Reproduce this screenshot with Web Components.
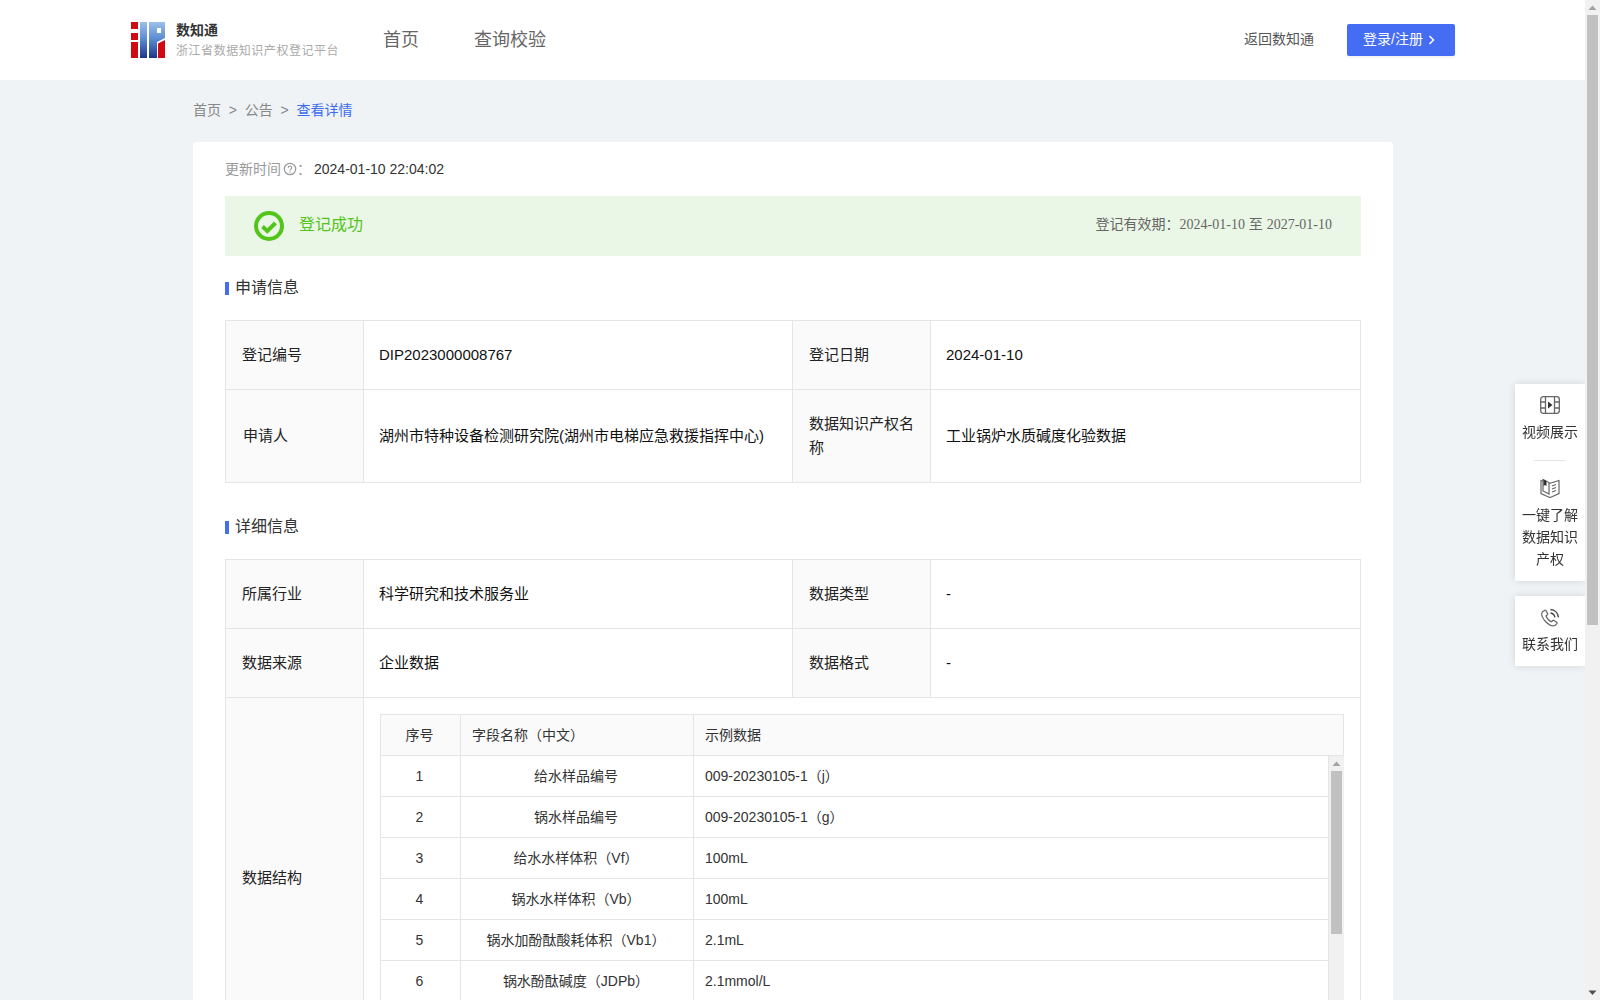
<!DOCTYPE html>
<html lang="zh"><head><meta charset="utf-8"><title>数知通</title>
<style>
html,body{margin:0;padding:0}
body{background:#eff3f6;font-family:"Liberation Sans","Noto Sans CJK SC",sans-serif;font-size:14px;color:#333;padding-right:15px}
</style></head><body>
<site-header></site-header>
<page-crumbs><span>首页</span><span>公告</span><b>查看详情</b></page-crumbs>
<detail-card>
  <update-line time="2024-01-10 22:04:02"></update-line>
  <status-banner from="2024-01-10" to="2027-01-10"></status-banner>
  <section-title style="margin-top:20px">申请信息</section-title>
  <kv-table style="margin-top:22px">
    <kv-cell label>登记编号</kv-cell><kv-cell>DIP2023000008767</kv-cell><kv-cell label>登记日期</kv-cell><kv-cell>2024-01-10</kv-cell>
    <kv-cell label indent>申请人</kv-cell><kv-cell>湖州市特种设备检测研究院(湖州市电梯应急救援指挥中心)</kv-cell><kv-cell label>数据知识产权名称</kv-cell><kv-cell>工业锅炉水质碱度化验数据</kv-cell>
  </kv-table>
  <section-title style="margin-top:32px">详细信息</section-title>
  <kv-table style="margin-top:22px">
    <kv-cell label>所属行业</kv-cell><kv-cell>科学研究和技术服务业</kv-cell><kv-cell label>数据类型</kv-cell><kv-cell>-</kv-cell>
    <kv-cell label>数据来源</kv-cell><kv-cell>企业数据</kv-cell><kv-cell label>数据格式</kv-cell><kv-cell>-</kv-cell>
    <kv-cell label>数据结构</kv-cell>
    <kv-cell wide><field-table>
      <field-row n="1" name="给水样品编号" sample="009-20230105-1（j）"></field-row>
      <field-row n="2" name="锅水样品编号" sample="009-20230105-1（g）"></field-row>
      <field-row n="3" name="给水水样体积（Vf）" sample="100mL"></field-row>
      <field-row n="4" name="锅水水样体积（Vb）" sample="100mL"></field-row>
      <field-row n="5" name="锅水加酚酞酸耗体积（Vb1）" sample="2.1mL"></field-row>
      <field-row n="6" name="锅水酚酞碱度（JDPb）" sample="2.1mmol/L"></field-row>
    </field-table></kv-cell>
  </kv-table>
  <div style="height:500px"></div>
</detail-card>
<side-dock></side-dock>
<page-scrollbar></page-scrollbar>
<script>
function def(name, css, html){
  customElements.define(name, class extends HTMLElement{
    constructor(){super();this.attachShadow({mode:'open'})}
    connectedCallback(){
      const h = typeof html==='function'?html(this):html;
      this.shadowRoot.innerHTML='<style>'+css+'</style>'+h;
    }
  });
}
const LOGO=`<svg width="34" height="36" viewBox="0 0 34 36" aria-hidden="true">
<defs><linearGradient id="lg" x1="0" y1="0" x2="0" y2="36" gradientUnits="userSpaceOnUse"><stop offset="0" stop-color="#9cc0ea"/><stop offset=".45" stop-color="#5f8ed2"/><stop offset="1" stop-color="#1d3787"/></linearGradient></defs>
<rect x="0" y="0" width="7" height="7" fill="#cf0a12"/><rect x="0" y="11" width="7" height="7" fill="#cf0a12"/><rect x="0" y="20" width="7" height="16" fill="#cf0a12"/>
<rect x="9" y="0" width="7" height="36" fill="url(#lg)"/>
<path d="M18 0H34V16L26 20V36H18Z" fill="url(#lg)"/>
<rect x="26" y="6" width="4" height="5" fill="#fff"/>
<path d="M27 21.500L34 18V36H27Z" fill="#cf0a12"/>
</svg>`;
def('site-header',`
:host{display:flex;align-items:center;height:80px;background:#fff;padding:0 130px 0 131px;box-sizing:border-box}
.brand{display:flex;align-items:center;gap:11px;width:252px}
.t{font-size:14px;font-weight:700;line-height:20px;color:#333;padding-top:1px}
.s{font-size:12px;letter-spacing:.55px;line-height:20px;color:#aaa;white-space:nowrap;margin-top:1px}
nav{display:flex;gap:55px;font-size:18px;color:#666;flex:1;padding-bottom:4px}
.back{color:#555;font-size:14px;margin-right:33px;padding-bottom:4px}
button{all:unset;box-sizing:border-box;width:108px;height:32px;background:#456df3;border-radius:2px;color:#fff;font:14px "Liberation Sans","Noto Sans CJK SC",sans-serif;display:flex;align-items:center;justify-content:center;gap:5px;box-shadow:0 2px 2px rgba(0,0,0,.05);padding:0 4px 4px 0}
svg.c{margin-top:3px}
`,`<div class="brand">${LOGO}<div><div class="t">数知通</div><div class="s">浙江省数据知识产权登记平台</div></div></div>
<nav><span>首页</span><span>查询校验</span></nav>
<span class="back">返回数知通</span>
<button><span>登录/注册</span><svg class="c" width="7" height="10" viewBox="0 0 7 10"><path d="M1.500 1l4 4-4 4" fill="none" stroke="#fff" stroke-width="1.500"/></svg></button>`);
def('page-crumbs',`
:host{display:flex;width:1200px;margin:0 0 0 193px;height:58px;padding-bottom:4px;align-items:center;color:#888;font-size:14px}
::slotted(span)::after{content:">";margin:0 7.800px;color:#888}
::slotted(b){font-weight:400;color:#3c6cf0}
`,`<slot></slot>`);
def('detail-card',`
:host{display:block;width:1200px;box-sizing:border-box;margin-left:193px;background:#fff;border-radius:4px;padding:16px 32px 24px}
`,`<slot></slot>`);
def('update-line',`
:host{display:flex;align-items:center;height:22px;font-size:14px;color:#333}
.l{color:#999;padding-bottom:2px}svg{margin:0 0 0 2px}.tm{margin-left:3px}
`,el=>`<span class="l">更新时间</span><svg width="14" height="14" viewBox="0 0 14 14"><circle cx="7" cy="7" r="5.700" fill="none" stroke="#999" stroke-width="1.200"/><path d="M5.300 5.700a1.700 1.700 0 1 1 2.600 1.400c-.6.400-.9.700-.9 1.300" fill="none" stroke="#999" stroke-width="1.100"/><circle cx="7" cy="10" r=".7" fill="#999"/></svg><span class="l">：</span><span class="tm">${el.getAttribute('time')}</span>`);
def('status-banner',`
:host{display:flex;align-items:center;height:60px;margin-top:16px;background:#ebf7e6;padding:0 29px;gap:15px}
.ok{color:#52c41a;font-size:16px;flex:1;padding-bottom:6px}
.v{color:#666;font-size:14px;padding-bottom:6px}.d{font-family:"Liberation Serif",serif}
`,el=>`<svg width="30" height="30" viewBox="0 0 30 30"><circle cx="15" cy="15" r="13" fill="none" stroke="#52c41a" stroke-width="4"/><path d="M8.500 15.500l4.800 4.500 8.200-8" fill="none" stroke="#52c41a" stroke-width="4"/></svg><span class="ok">登记成功</span><span class="v">登记有效期：<span class="d">${el.getAttribute('from')}</span> 至 <span class="d">${el.getAttribute('to')}</span></span>`);
def('section-title',`
:host{display:flex;align-items:center;gap:6px;font-size:16px;line-height:22px;color:#333;height:22px}
i{width:4px;height:13px;background:#456df3;margin-top:3px}
span{padding-top:1px}
`,`<i></i><span><slot></slot></span>`);
def('kv-table',`
:host{display:grid;grid-template-columns:138px 429px 138px 1fr;border-top:1px solid #e5e5e5;border-left:1px solid #e5e5e5}
`,`<slot></slot>`);
def('kv-cell',`
:host{display:flex;align-items:center;box-sizing:border-box;padding:22px 16px 22px 15px;border-right:1px solid #e5e5e5;border-bottom:1px solid #e5e5e5;color:#111;font-size:15px;line-height:24px}
:host([label]){background:#fafafa;color:#222;padding-left:16px}
:host([indent]){padding-left:17px}
:host([wide]){grid-column:2 / 5;display:block;padding:16px;font-size:14px}
`,`<slot></slot>`);
const UP=c=>`<svg width="9" height="6" viewBox="0 0 9 6"><path d="M4.500 0.500L8.500 5H.5z" fill="${c}"/></svg>`;
const DOWN=c=>`<svg width="9" height="6" viewBox="0 0 9 6"><path d="M.5 .5H8.500L4.500 5z" fill="${c}"/></svg>`;
def('field-table',`
:host{display:block;border-left:1px solid #e5e5e5;color:#333;line-height:20px}
.h{display:grid;grid-template-columns:80px 233px 1fr;height:40px;background:#fafafa;border:1px solid #e5e5e5;border-left:0;align-items:stretch}
.h span{display:flex;align-items:center;padding:0 12px 0 11px;border-right:1px solid #e5e5e5}
.h span:first-child{justify-content:center;padding:0 2px 0 0}.h span:last-child{border:0}
.b{display:grid;grid-template-columns:1fr 15px;height:286px;overflow:hidden}
.sb{background:#f1f1f1;display:flex;flex-direction:column;align-items:center}
.up{height:15px;display:flex;align-items:center;justify-content:center;flex:none}
.th{width:11px;height:163px;background:#c1c1c1;flex:none}
`,`<div class="h"><span>序号</span><span>字段名称（中文）</span><span>示例数据</span></div><div class="b"><div><slot></slot></div><div class="sb"><div class="up">${UP('#a3a3a3')}</div><div class="th"></div></div></div>`);
def('field-row',`
:host{display:grid;grid-template-columns:80px 233px 1fr;height:41px;box-sizing:border-box;border-bottom:1px solid #e5e5e5;border-right:1px solid #e5e5e5;align-items:stretch}
span{display:flex;align-items:center;border-right:1px solid #e5e5e5;justify-content:center;color:#333;padding-right:2px}
span:last-child{border:0;justify-content:flex-start;padding:0 12px 0 11px}
`,el=>`<span>${el.getAttribute('n')}</span><span>${el.getAttribute('name')}</span><span>${el.getAttribute('sample')}</span>`);
const ICON_FILM=`<svg width="20" height="18" viewBox="0 0 20 18" fill="none" stroke="#666" stroke-width="1.300"><rect x=".7" y=".7" width="18.600" height="16.600" rx="2.500"/><path d="M5.500 1v16M14.500 1v16M1 6h4.500M1 12h4.500M14.500 6H19M14.500 12H19"/><path d="M8 5.500l4.500 3.500L8 12.500z" fill="#333" stroke="none"/></svg>`;
const ICON_BOOK=`<svg width="20" height="20" viewBox="0 0 20 20" fill="none" stroke="#666" stroke-width="1.200"><path d="M3 3L1 2.500V15.500L9.200 19.300c.5.200 1.100.200 1.600 0L19 15.500V2.500L11 5c-.6.200-1.400.200-2 0"/><path d="M3 1.500L9 4.500V16L3 13z"/><path d="M3.500 1.500V8l1.500-1 1.500 1V3z" fill="#333" stroke="none"/><path d="M12 8l4-1.500M12 11l4-1.500M12 14l4-1.500"/></svg>`;
const ICON_PHONE=`<svg width="20" height="20" viewBox="0 0 20 20" fill="none" stroke="#666" stroke-width="1.200"><path d="M4.500 2.500L2.300 4C1 6 2.500 10 5.500 13.500c3 3 7 5 9.500 4l1.800-1.800c.4-.5.300-1.100-.2-1.500l-2.500-1.800c-.5-.3-1-.3-1.400.1l-1.200 1.300C9.500 13 7 10.500 6 8l1.300-1.200c.4-.4.500-1 .2-1.400L6 2.700C5.600 2.200 5 2.100 4.500 2.500z"/><path d="M10.500 5c2.300.3 4 2 4.400 4.300M10.500 1.500c4.300.3 7.500 3.600 8 7.800" stroke="#444" stroke-width="1.400"/></svg>`;
def('side-dock',`
:host{position:fixed;right:15px;top:384px;width:70px;display:flex;flex-direction:column;gap:15px;color:#333;font-size:14px;line-height:22px;text-align:center}
.p{background:#fff;box-shadow:0 0 8px rgba(0,0,0,.12)}
.a{padding:12px 0 11.250px}.b{padding:12px 0 11.500px}
svg{display:block;margin:0 auto}
.m1{margin-bottom:6.500px}.m2{margin-bottom:6px}.m3{margin-bottom:4.500px}
hr{width:32px;height:1px;background:#e5e5e5;border:0;margin:17.250px auto 17px}
`,`<div class="p a">${ICON_FILM.replace('<svg','<svg class="m1"')}<div>视频展示</div><hr>${ICON_BOOK.replace('<svg','<svg class="m2"')}<div>一键了解<br>数据知识<br>产权</div></div>
<div class="p b">${ICON_PHONE.replace('<svg','<svg class="m3"')}<div>联系我们</div></div>`);
def('page-scrollbar',`
:host{position:fixed;top:0;right:0;bottom:0;width:15px;background:#f1f1f1;display:flex;flex-direction:column;align-items:center}
.e{height:15px;flex:none;display:flex;align-items:center;justify-content:center}
.t{width:11px;height:610px;background:#c1c1c1;flex:none}
.s{flex:1}
`,`<div class="e">${UP('#a3a3a3')}</div><div class="t"></div><div class="s"></div><div class="e">${DOWN('#505050')}</div>`);
</script>
</body></html>
